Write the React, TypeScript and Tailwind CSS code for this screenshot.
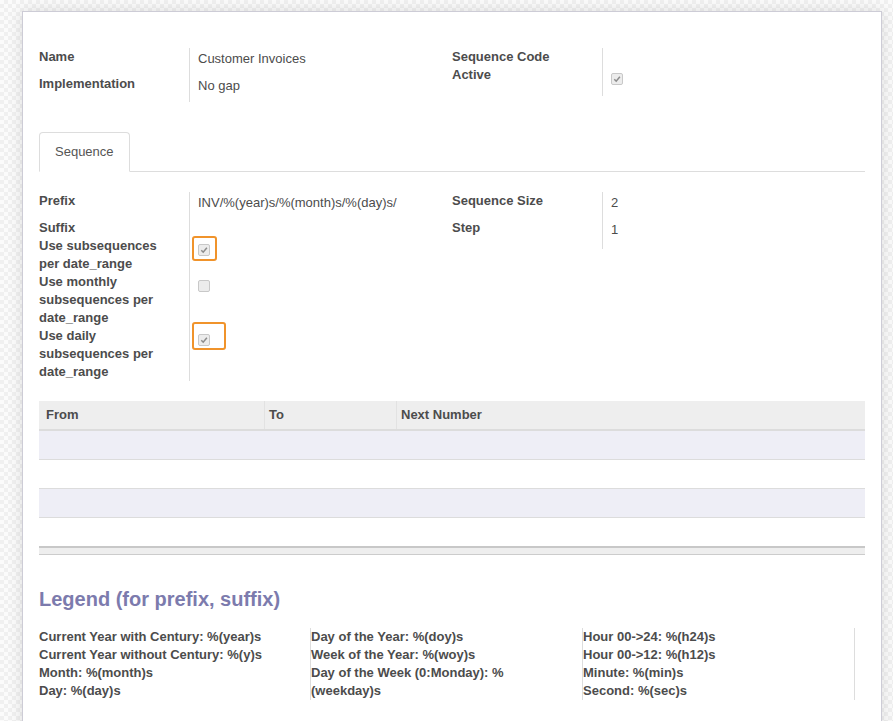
import React from 'react';

type Row = {
  label: string;
  value?: React.ReactNode;
  h: string;
};

function Checkbox({ checked }: { checked: boolean }) {
  return (
    <span className="flex h-[12px] w-[12px] items-center justify-center rounded-[2px] border border-[#c8c8c8] bg-[#ececec]">
      {checked && (
        <svg viewBox="0 0 10 10" className="h-[8px] w-[8px]">
          <path d="M1.6 5.4 L4 7.8 L8.6 2.2" stroke="#8c8c8c" strokeWidth="1.9" fill="none" />
        </svg>
      )}
    </span>
  );
}

function Marked({ children, box }: { children: React.ReactNode; box: string }) {
  // orange annotation drawn over the checkbox
  return (
    <span className="relative flex w-fit">
      {children}
      <span className={`absolute rounded-[3px] border-2 border-[#f0932b] ${box}`} />
    </span>
  );
}

function Group({ rows }: { rows: Row[] }) {
  return (
    <div className="flex flex-col">
      {rows.map(row => (
        <div key={row.label} className={`flex ${row.h}`}>
          <div className="w-[151px] shrink-0 border-r border-[#dddddd] pr-[15px] font-bold leading-[18px]">
            {row.label}
          </div>
          <div className="pl-2 pt-[2px] leading-[18px]">{row.value}</div>
        </div>
      ))}
    </div>
  );
}

const legend = [
  [
    'Current Year with Century: %(year)s',
    'Current Year without Century: %(y)s',
    'Month: %(month)s',
    'Day: %(day)s',
  ],
  ['Day of the Year: %(doy)s', 'Week of the Year: %(woy)s', 'Day of the Week (0:Monday): %', '(weekday)s'],
  ['Hour 00->24: %(h24)s', 'Hour 00->12: %(h12)s', 'Minute: %(min)s', 'Second: %(sec)s'],
];

export default function App() {
  return (
    <div className="min-h-[721px] overflow-hidden bg-[#f7f7f7] bg-[image:repeating-conic-gradient(#f0f0f0_0_25%,#fbfbfb_0_50%)] bg-[length:8px_8px] pl-[22px] pt-[11px] font-['Liberation_Sans',Arial,sans-serif] text-[13px] text-[#4c4c4c]">
      <div className="w-[860px] border border-[#cdccd6] bg-white px-4 pb-10 pt-[36px] shadow-[0_0_14px_rgba(0,0,0,0.12)]">
        {/* Header fields */}
        <div className="grid grid-cols-2">
          <Group
            rows={[
              { label: 'Name', value: 'Customer Invoices', h: 'h-[27px]' },
              { label: 'Implementation', value: 'No gap', h: 'h-[27px]' },
            ]}
          />
          <Group
            rows={[
              { label: 'Sequence Code', h: 'h-[18px]' },
              {
                label: 'Active',
                value: (
                  <span className="mt-[5px] block">
                    <Checkbox checked />
                  </span>
                ),
                h: 'h-[30px]',
              },
            ]}
          />
        </div>

        {/* Tabs */}
        <div className="mt-[30px] flex border-b border-[#dddddd]">
          <div className="-mb-px h-[40px] rounded-t-[4px] border border-[#dddddd] border-b-white bg-white px-[15px] leading-[38px] text-[#555]">
            Sequence
          </div>
        </div>

        <div className="mt-[20px] grid grid-cols-2">
          <Group
            rows={[
              { label: 'Prefix', value: 'INV/%(year)s/%(month)s/%(day)s/', h: 'h-[27px]' },
              { label: 'Suffix', h: 'h-[18px]' },
              {
                label: 'Use subsequences per date_range',
                value: (
                  <span className="mt-[5px] block">
                    <Marked box="-left-[6px] -top-[8px] h-[25px] w-[25px]">
                      <Checkbox checked />
                    </Marked>
                  </span>
                ),
                h: 'h-[36px]',
              },
              {
                label: 'Use monthly subsequences per date_range',
                value: (
                  <span className="mt-[5px] block">
                    <Checkbox checked={false} />
                  </span>
                ),
                h: 'h-[54px]',
              },
              {
                label: 'Use daily subsequences per date_range',
                value: (
                  <span className="mt-[5px] block">
                    <Marked box="-left-[6px] -top-[12px] h-[28px] w-[34px]">
                      <Checkbox checked />
                    </Marked>
                  </span>
                ),
                h: 'h-[54px]',
              },
            ]}
          />
          <Group
            rows={[
              { label: 'Sequence Size', value: '2', h: 'h-[27px]' },
              { label: 'Step', value: '1', h: 'h-[30px]' },
            ]}
          />
        </div>

        {/* Date ranges */}
        <div className="mt-[20px]">
          <div className="flex h-[30px] border-b-2 border-[#dcdcdc] bg-[#eeeeee] font-bold leading-[28px]">
            <div className="w-[225px] pl-[7px]">From</div>
            <div className="w-[132px] border-l border-[#e2e2e2] pl-[4px]">To</div>
            <div className="flex-1 border-l border-[#e2e2e2] pl-[4px]">Next Number</div>
          </div>
          <div className="h-[29px] border-b border-[#dcdcdc] bg-[#eeeef6]" />
          <div className="h-[29px] border-b border-[#dcdcdc]" />
          <div className="h-[29px] border-b border-[#dcdcdc] bg-[#eeeef6]" />
          <div className="h-[28px]" />
          <div className="h-[9px] border-b border-t-2 border-b-[#cccccc] border-t-[#c8c8c8] bg-[#eeeeee]" />
        </div>

        {/* Legend */}
        <h3 className="mt-[33px] text-[20px] font-bold leading-[22px] text-[#7c7bad]">Legend (for prefix, suffix)</h3>
        <div className="mt-[18px] grid grid-cols-[272px_272px_272px] font-bold leading-[18px]">
          {legend.map((col, i) => (
            <div key={i} className="border-r border-[#dddddd] pr-2">
              {col.map(line => (
                <div key={line}>{line}</div>
              ))}
            </div>
          ))}
        </div>
      </div>
    </div>
  );
}
